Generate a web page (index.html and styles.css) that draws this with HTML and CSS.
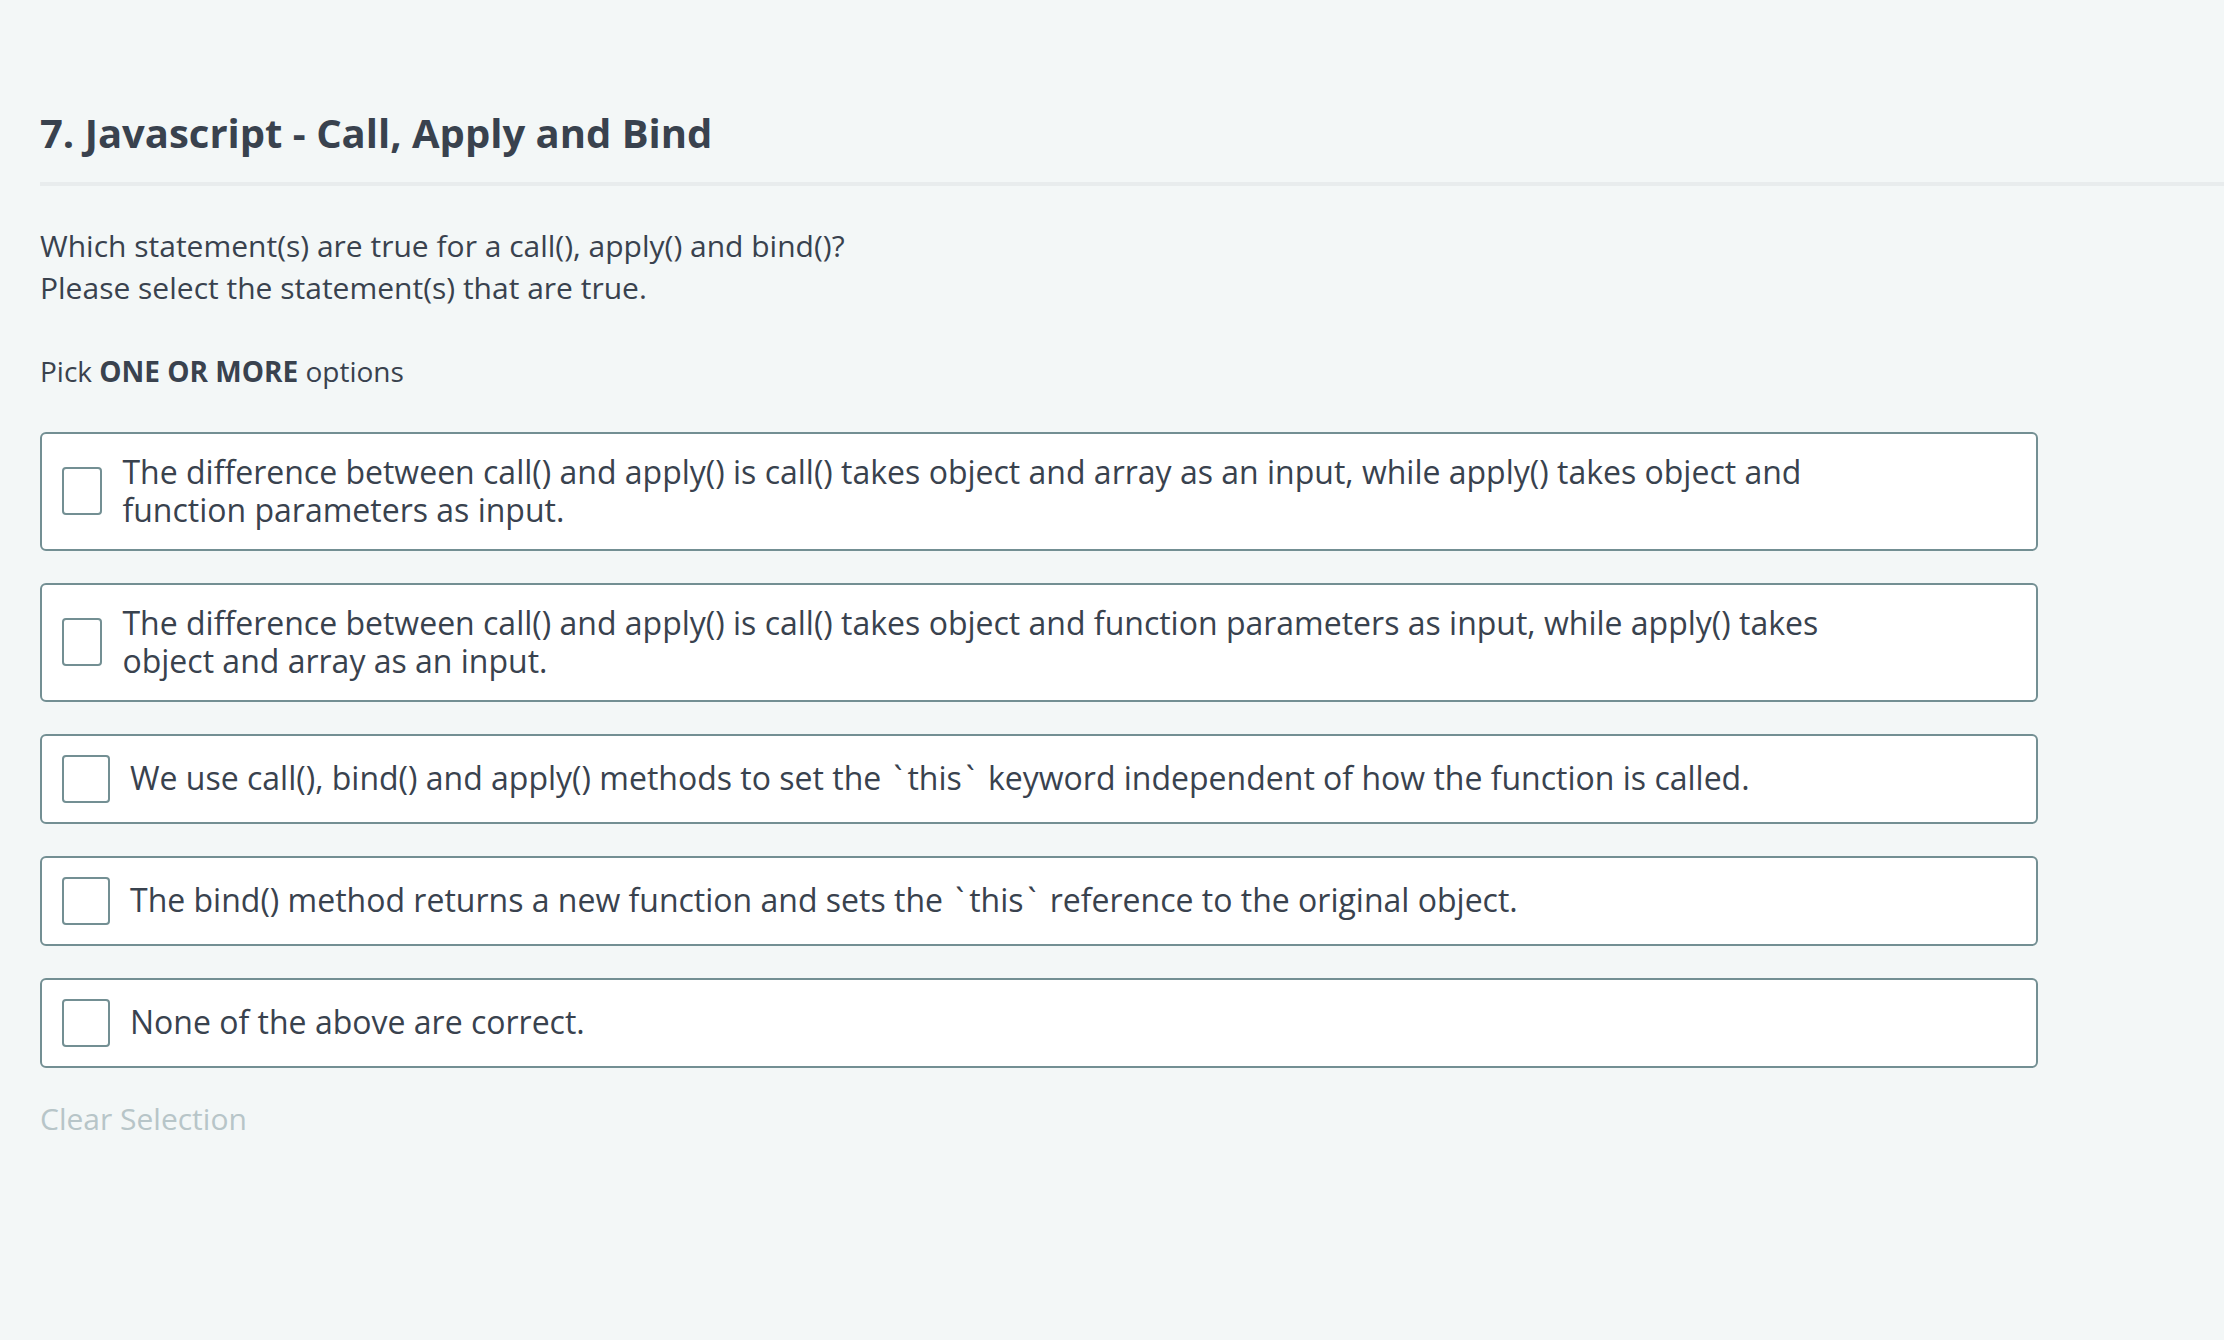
FILE: index.html
```html
<!DOCTYPE html>
<html lang="en">
<head>
<meta charset="utf-8">
<title>7. Javascript - Call, Apply and Bind</title>
<link rel="stylesheet" href="styles.css">
</head>
<body>
<main class="page">
  <header class="q-header">
    <h1 class="q-title">7. Javascript - Call, Apply and Bind</h1>
  </header>
  <section class="q-body">
    <p class="q-text">Which statement(s) are true for a call(), apply() and bind()?<br>Please select the statement(s) that are true.</p>
    <p class="q-pick">Pick <strong>ONE OR MORE</strong> options</p>
    <div class="options">
      <label class="option">
        <span class="checkbox"></span>
        <span class="option-text">The difference between call() and apply() is call() takes object and array as an input, while apply() takes object and function parameters as input.</span>
      </label>
      <label class="option">
        <span class="checkbox"></span>
        <span class="option-text">The difference between call() and apply() is call() takes object and function parameters as input, while apply() takes object and array as an input.</span>
      </label>
      <label class="option">
        <span class="checkbox"></span>
        <span class="option-text">We use call(), bind() and apply() methods to set the <span class="tick">`</span>this<span class="tick">`</span> keyword independent of how the function is called.</span>
      </label>
      <label class="option">
        <span class="checkbox"></span>
        <span class="option-text">The bind() method returns a new function and sets the <span class="tick">`</span>this<span class="tick">`</span> reference to the original object.</span>
      </label>
      <label class="option">
        <span class="checkbox"></span>
        <span class="option-text">None of the above are correct.</span>
      </label>
    </div>
    <div class="clear">Clear Selection</div>
  </section>
</main>
</body>
</html>
```

FILE: styles.css
```css
html, body {
  margin: 0;
  padding: 0;
}

body {
  background: #f3f7f7;
  color: #39424e;
  font-family: "Open Sans", "Noto Sans", sans-serif;
  width: 2224px;
  height: 1340px;
  overflow: hidden;
}

.page {
  padding: 0 0 0 40px;
}

.q-header {
  padding-top: 108px;
  padding-bottom: 24px;
  border-bottom: 4px solid #e8eced;
}

.q-title {
  margin: 0;
  font-size: 40px;
  line-height: 50px;
  font-weight: 700;
}

.q-body {
  width: 1998px;
  padding-top: 39px;
}

.q-text {
  margin: 0;
  font-size: 30px;
  line-height: 42px;
}

.q-pick {
  margin: 41px 0 0;
  font-size: 28px;
  line-height: 42px;
}

.q-pick strong {
  font-weight: 700;
}

.options {
  margin-top: 40px;
  display: flex;
  flex-direction: column;
  gap: 32px;
}

.option {
  display: flex;
  align-items: center;
  gap: 20px;
  background: #ffffff;
  border: 2px solid #738f93;
  border-radius: 6px;
  padding: 19px 150px 19px 20px;
}

.checkbox {
  width: 48px;
  height: 48px;
  box-sizing: border-box;
  border: 2px solid #738f93;
  border-radius: 4px;
  background: #ffffff;
  flex: 0 1 48px;
}

.option-text {
  flex: 0 1 auto;
  font-size: 32px;
  line-height: 38.4px;
}

.tick {
  margin-left: 4px;
  margin-right: 5px;
}

.clear {
  margin-top: 30px;
  font-size: 30px;
  line-height: 42px;
  color: #b7c5c8;
}
```
